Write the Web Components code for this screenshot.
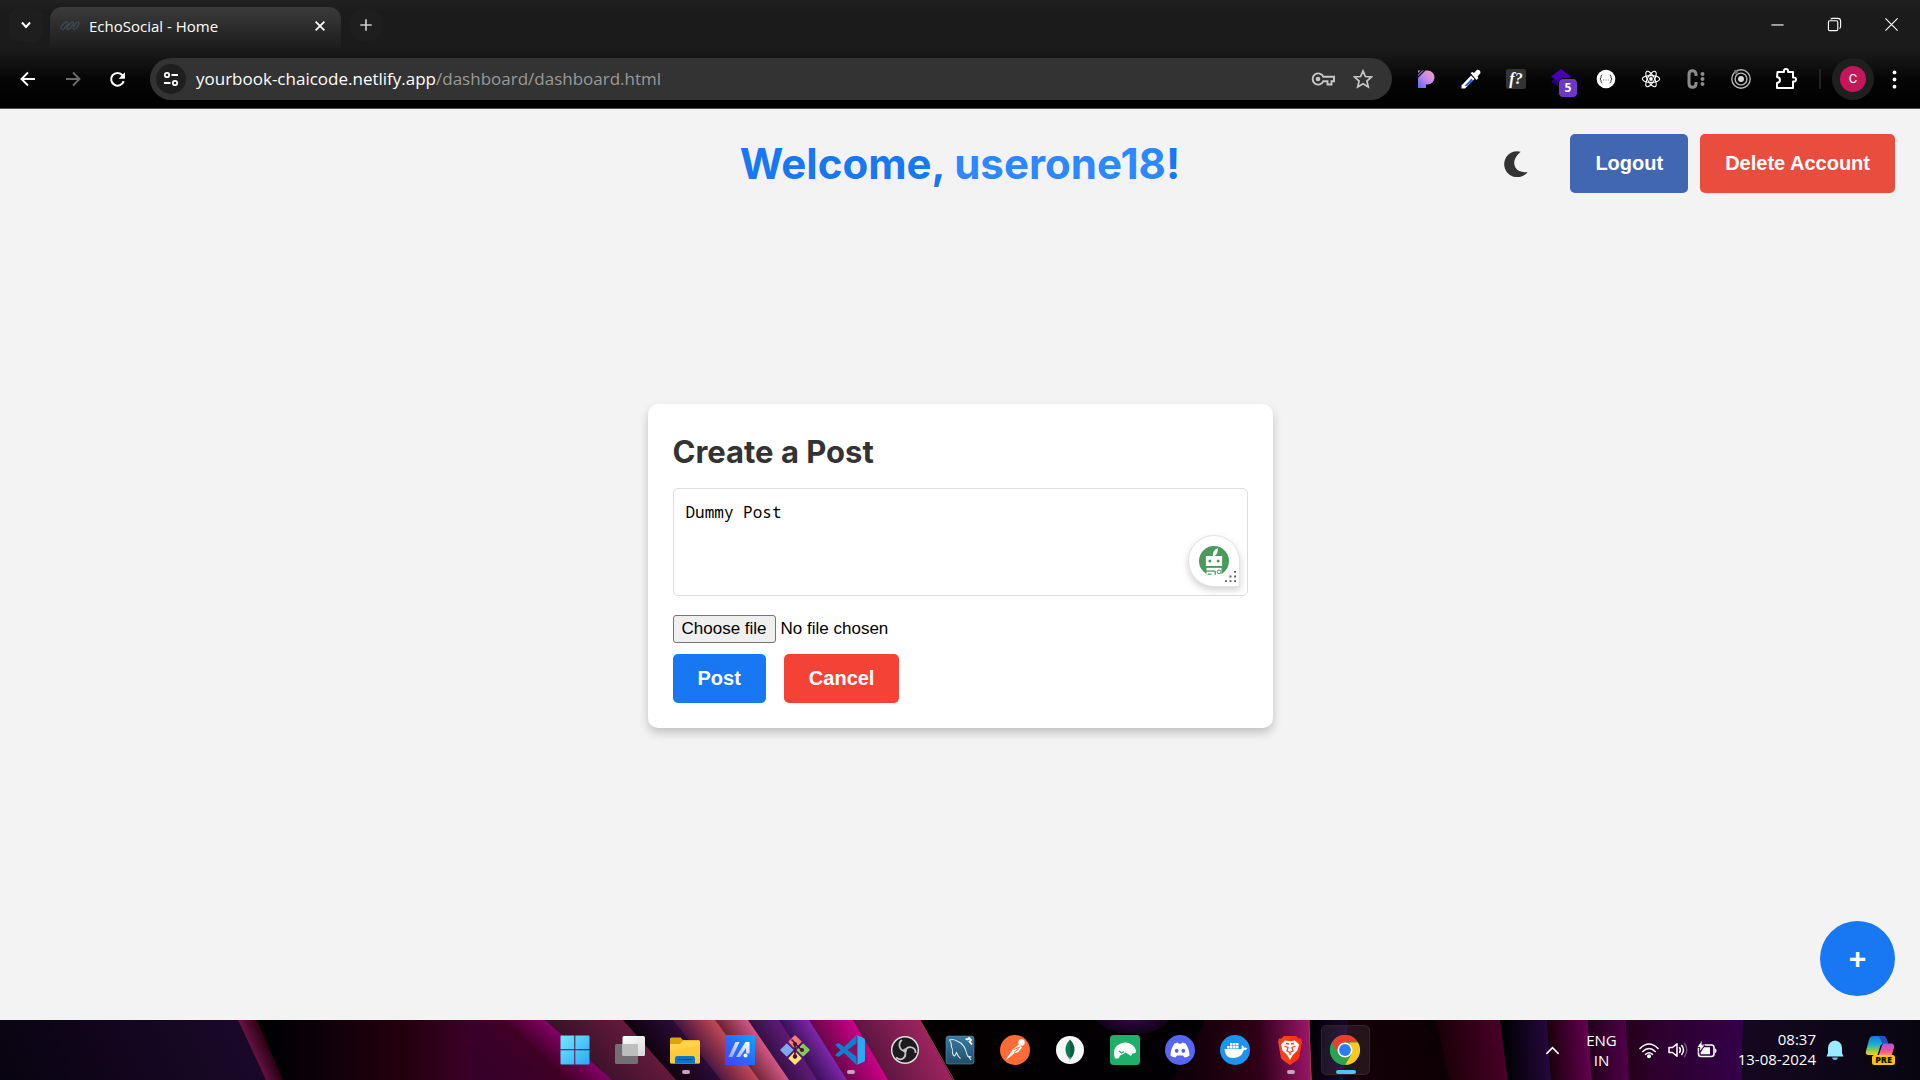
<!DOCTYPE html>
<html lang="en-GB">
<head>
<meta charset="utf-8">
<title>EchoSocial - Home</title>
<style>
  html, body { margin: 0; height: 100%; }
  body { font-family: "Liberation Sans", Arial, sans-serif; background: #f3f3f3; overflow: hidden; }
</style>
</head>
<body>
<desk-top>
  <browser-frame>
    <echo-dashboard user="userone18"><create-post></create-post></echo-dashboard>
  </browser-frame>
  <task-bar></task-bar>
</desk-top>

<script>
const define = (name, css, html) => customElements.define(name, class extends HTMLElement {
  constructor() {
    super();
    const t = document.createElement('template');
    t.innerHTML = `<style>:host,*{box-sizing:border-box}${css}</style>${typeof html === 'function' ? html(this) : html}`;
    this.attachShadow({ mode: 'open' }).append(t.content.cloneNode(true));
  }
});

/* Icon drawings: [viewBox size, markup] */
const line = 'fill="none" stroke="currentColor"';
const ICONS = {
  chevDown: [16, `<path d="M4 5.5l4 4.5 4-4.5" ${line} stroke-width="2"/>`],
  chevUp: [16, `<path d="M2 11l6-6 6 6" ${line} stroke-width="1.8" stroke-linecap="round"/>`],
  close: [16, `<path d="M3 3l10 10M13 3L3 13" ${line} stroke-width="2"/>`],
  plus: [16, `<path d="M8 1.500v13M1.500 8h13" ${line} stroke-width="1.900"/>`],
  winMin: [16, `<path d="M1.500 8.500h13" ${line} stroke-width="1.200"/>`],
  winMax: [16, `<rect x="1.500" y="4" width="10" height="10.500" rx="1.500" ${line} stroke-width="1.200"/><path d="M4 2.500q.5-1 2-1h5.500q3 0 3 3v6q0 1.300-1.200 1.800" ${line} stroke-width="1.200"/>`],
  winClose: [16, `<path d="M1.500 1.500l13 13M14.500 1.500l-13 13" ${line} stroke-width="1.200"/>`],
  back: [16, `<path d="M15 8H2M8 1.500L1.500 8 8 14.500" ${line} stroke-width="1.900"/>`],
  forward: [16, `<path d="M1 8h13M8 1.500L14.500 8 8 14.500" ${line} stroke-width="1.900"/>`],
  reload: [16, `<path d="M13.800 9.500A6 6 0 1 1 12.700 4L14.500 6" ${line} stroke-width="1.900"/><path d="M15 1.200v6H9z" fill="currentColor"/>`],
  tune: [16, `<g ${line} stroke-width="1.800"><circle cx="4" cy="4" r="2.200"/><path d="M8.500 4H15M1 12h6.500"/><circle cx="12" cy="12" r="2.200"/></g>`],
  key: [24, `<g ${line} stroke-width="1.900"><path d="M12.400 9.800A5.600 5.600 0 1 0 12.400 14.200H16.500V17.500H20.500V14.200H23V9.800Z"/></g><circle cx="7" cy="12" r="2.300" fill="currentColor"/>`],
  star: [20, `<path d="M10 1.900l2.400 5.600 6.100.5-4.600 4 1.400 6L10 14.800 4.700 18l1.400-6-4.600-4 6.100-.5z" ${line} stroke-width="1.700"/>`],
  pieces: [20, `<defs><linearGradient id="g" x1="1" y1="0" x2="0" y2="1"><stop offset="0" stop-color="#ff9fc0"/><stop offset=".5" stop-color="#c18aea"/><stop offset="1" stop-color="#5b62ff"/></linearGradient></defs><path d="M2 1.500h9.500a7 7 0 0 1 0 14H10V19H2z" fill="url(#g)"/><path d="M1 6L6 1M1 9L9 1" stroke="#0d0d0d" stroke-width="1.200"/>`],
  dropper: [20, `<path d="M2.500 19.500H.5v-3L10 6.500 13.500 10 4 19.500z" fill="#fff"/><path d="M3.500 17L10.500 9.500 12 11.500 6 17z" fill="#2f55d4"/><path d="M9.500 4l2-1 1.500 1L16 .8Q19.500.5 19.500 4L16.500 7.500 17.500 9 15.500 11z" fill="#fff"/>`],
  whatFont: [20, `<rect width="20" height="20" rx="2.500" fill="#333"/><text x="10" y="15" text-anchor="middle" font-family="Liberation Serif, serif" font-style="italic" font-weight="700" font-size="16" fill="#fff">f?</text>`],
  layers: [20, `<path d="M0 12.500L10 5l10 7.500L10 20z" fill="#23007c"/><path d="M0 7.500L10 0l10 7.500L10 15z" fill="#4600b8"/>`],
  json: [20, `<circle cx="10" cy="10" r="9.300" fill="#fff"/><g fill="none" stroke="#333" stroke-width="1"><path d="M6.300 6Q5 6 5 7.500v1.300L4 10l1 1.200v1.300q0 1.500 1.300 1.500M13.700 6q1.300 0 1.300 1.500v1.300l1 1.200-1 1.200v1.300q0 1.500-1.300 1.500"/></g><path d="M7.200 11h1M9.500 11h1M11.800 11h1" stroke="#777" stroke-width="1"/>`],
  react: [20, `<g fill="none" stroke="#fff" stroke-width="1.100"><ellipse cx="10" cy="10" rx="8.700" ry="3.400"/><ellipse cx="10" cy="10" rx="8.700" ry="3.400" transform="rotate(60 10 10)"/><ellipse cx="10" cy="10" rx="8.700" ry="3.400" transform="rotate(120 10 10)"/></g><circle cx="10" cy="10" r="1.900" fill="#fff"/>`],
  cdots: [20, `<path d="M10 7V5.500Q10 1.700 6.500 1.700T3 5.500v9q0 3.800 3.500 3.800T10 14.500V13" fill="none" stroke="#8b8b8b" stroke-width="3"/><g fill="#8b8b8b"><circle cx="16.500" cy="5" r="2"/><circle cx="16.500" cy="10" r="2"/><circle cx="16.500" cy="15" r="2"/></g>`],
  target: [20, `<g fill="none" stroke="#b5b5b5" stroke-width="1.400"><circle cx="10" cy="10" r="9.200"/><circle cx="10" cy="10" r="5.900"/></g><circle cx="10" cy="10" r="3" fill="#d5d5d5"/><circle cx="5" cy="2.800" r="2" fill="#777"/>`],
  puzzle: [22, `<path d="M2.500 4H9q-.5-3 2-3t2 3h5v5.500q3-.5 3 2t-3 2V20h-16v-5q3-.5 3-3t-3-3z" ${line} stroke-width="2" stroke-linejoin="round"/>`],
  dots: [20, `<g fill="currentColor"><circle cx="10" cy="2.500" r="2"/><circle cx="10" cy="10" r="2"/><circle cx="10" cy="17.500" r="2"/></g>`],
  favicon: [20, `<g fill="none" stroke="#3d4a54" stroke-width="1.300"><path d="M2.500 13.500Q-.5 12 2 9.500L5 6.500Q8 5 8 8L4.500 12.500Q3.500 14 2.500 13.500M8 13.500Q6.500 12.500 8 10L11 6.500Q14 5 13.500 8L10 12.500Q9 14 8 13.500M14 13.500Q12.500 12.500 14 10L16.500 6.500Q20 5 19 8.500L16 12.500Q15 14 14 13.500"/></g>`],
  moon: [24, `<path d="M17.200 0.600A12 12 0 1 0 23.700 19.300Q16 20.500 12.500 15.500 8.500 8 17.200.6z" fill="#333"/>`],
  robot: [24, `<circle cx="12" cy="12" r="12" fill="#4a9a5b"/><g fill="#fff"><path d="M11.200 8Q10.500 3.500 15 1.500q.5 4-2.500 6.500z"/><path d="M5.500 8h13v8h-13z"/><path d="M6 17.500h12V24H6z"/></g><g fill="#4a9a5b"><circle cx="8.700" cy="12" r="1.200"/><circle cx="15.300" cy="12" r="1.200"/><path d="M9.500 16h5v.8h-5zM4 19.500h9v1H4zM12.500 20h1v3h-1zM7 22h3v1H7z"/></g><circle cx="16" cy="20.700" r="1.500" fill="none" stroke="#4a9a5b" stroke-width=".8"/>`],
  grip: [12, `<g fill="#555"><path d="M10 0h2v2h-2zM10 5h2v2h-2zM10 10h2v2h-2zM5 5h2v2H5zM5 10h2v2H5zM0 10h2v2H0z"/></g>`],
  windows: [30, `<defs><linearGradient id="g" x1="0" y1="0" x2="1" y2="1" gradientUnits="objectBoundingBox"><stop offset="0" stop-color="#74e6fd"/><stop offset="1" stop-color="#2aa9f5"/></linearGradient></defs><path d="M.5 1.500Q.5.5 1.500.500H14.300V14.300H.5zM15.300.500H28.500q1 0 1 1V14.300H15.300zM.5 15.300H14.300V29.500H1.500q-1 0-1-1zM15.300 15.300H29.500V28.500q0 1-1 1H15.300z" fill="url(#g)"/>`],
  taskView: [30, `<defs><linearGradient id="g" x2="1" y2="1"><stop stop-color="#fff"/><stop offset="1" stop-color="#d8d8d8"/></linearGradient></defs><rect x="0" y="9" width="23" height="20" rx="1.500" fill="#737075"/><rect x="7.500" y="1" width="22.500" height="20" rx="1.500" fill="url(#g)"/><path d="M7.500 9H23v12H9q-1.500 0-1.500-1.500z" fill="#bdbdbd"/>`],
  folder: [30, `<path d="M0 4Q0 2.500 1.500 2.500H10.500L13 5H28.500Q30 5 30 7V26H0z" fill="#e0a20c"/><path d="M0 9H10L13 5.500H28.500q1.500 0 1.500 1.500V27q0 1.500-1.500 1.500h-27Q0 28.500 0 27z" fill="#ffd24b"/><path d="M0 16L30 10V27q0 1.500-1.500 1.500h-27Q0 28.500 0 27z" fill="#fbc42c" opacity=".6"/><path d="M5 28.500V23.500Q5 21 7.500 21h15q2.500 0 2.500 2.500v5z" fill="#0c74c4"/><path d="M8.500 24.500h13" stroke="#064a86" stroke-width="1"/>`],
  armoury: [30, `<defs><linearGradient id="g" x1="0" y1="1" x2="1" y2="0"><stop stop-color="#4c3cff"/><stop offset=".5" stop-color="#2a6bff"/><stop offset="1" stop-color="#05a8ff"/></linearGradient><linearGradient id="h" x1="0" y1="1" x2="1" y2="0"><stop stop-color="#8ea4ff"/><stop offset="1" stop-color="#fff"/></linearGradient></defs><rect width="30" height="30" fill="url(#g)"/><path d="M3.500 22L10.500 7H14.500L7.500 22zM11 22L20.500 7H24.500V18.500H21V13L15 22z" fill="url(#h)"/><circle cx="20.500" cy="20.500" r="2" fill="#fff"/>`],
  git: [30, `<g stroke-width="1.500" stroke-linejoin="round"><path d="M15 1L20.800 6.800 15 12.600 9.200 6.800z" fill="#f77b7b" stroke="#f77b7b"/><path d="M6.800 9.200L12.600 15 6.800 20.800 1 15z" fill="#80a9f5" stroke="#80a9f5"/><path d="M23.200 9.200L29 15 23.200 20.800 17.400 15z" fill="#82cc5b" stroke="#82cc5b"/><path d="M15 17.400L20.800 23.200 15 29 9.200 23.200z" fill="#ffe07a" stroke="#ffe07a"/></g><g stroke="#4a1030" stroke-width="1.600" fill="none"><path d="M11.500 4.500L15 8V21M15.500 9l6 6"/></g><g fill="#4a1030"><circle cx="15" cy="9" r="2"/><circle cx="22" cy="15" r="2"/><circle cx="15" cy="21.500" r="2.200"/></g>`],
  vscode: [30, `<path d="M21.500 0L9 12 3.500 8 0 9.800 5.500 15 0 20.200 3.500 22 9 18 21.500 30z" fill="#0b80cb"/><path d="M22 8L12.500 15 22 22z" fill="#8a0f62"/><path d="M21.500 0L28.500 3Q30 3.500 30 5V25Q30 26.500 28.500 27L21.500 30Q22.500 29 22.500 27V3Q22.500 1 21.500 0z" fill="#2da8f0"/>`],
  obs: [30, `<circle cx="15" cy="15" r="13.300" fill="#1d1b1e" stroke="#ddd" stroke-width="1.500"/><g fill="none" stroke="#c9c5c9" stroke-width="1.800"><path d="M14.500 16Q10 15 9.500 11 9 7 12 5M15 15.500Q17.500 11 22 12.500 26 14 25.500 18M15 16Q16.500 21 13 23.500 10 25.500 6 22.500"/></g><circle cx="15" cy="15.500" r="2" fill="#c9c5c9"/>`],
  mysql: [30, `<defs><linearGradient id="g" x2="0" y2="1"><stop stop-color="#3a7aa2"/><stop offset="1" stop-color="#204f6b"/></linearGradient></defs><rect x="1" y="1" width="28" height="28" rx="2.500" fill="url(#g)" stroke="#5690b3" stroke-width=".6"/><path d="M26 25L22 19.500Q20 9 12 6 8 3.500 4.500 5 7 8 6.500 12 8 14 7.500 18q1 4 2.500 2.500l1.500-3Q13 21.500 15.500 23.500M22 21l4.500 1" fill="none" stroke="#d7e7f0" stroke-width="1.100"/><path d="M20.500 4l2 .5L24 3l2 2-1.500 1.500L27 9.500" fill="none" stroke="#fff" stroke-width="1.800"/>`],
  postman: [30, `<circle cx="15" cy="15" r="15" fill="#ff6c37"/><circle cx="21.500" cy="7.500" r="3.200" fill="#fff"/><path d="M6 24.500L13 14 19 9.500 22 12.500 18 17.500 14.500 18 7.500 24z" fill="#fff"/><path d="M13.500 14.500L20 12M14 17.500l5-4" stroke="#ff6c37" stroke-width="1"/>`],
  mongo: [30, `<circle cx="15" cy="15" r="14" fill="#f8f8f8"/><path d="M15 4.500Q19.500 9 19.500 14.500 19.500 20 15 24.500z" fill="#0a5f45"/><path d="M15 4.500Q10.500 9 10.500 14.500 10.500 20 15 24.500z" fill="#127a55"/><path d="M15 22v3.500" stroke="#a8c8b8" stroke-width=".8"/>`],
  bear: [30, `<rect width="30" height="30" rx="3.500" fill="#1db06b"/><path d="M4 18Q4 11.500 9 9.500 14 6 20 8.500 25 11 26 15.500L25.500 18 22.500 18.500 21 21 18 19 15.500 17.500 12.500 19.500Q10 19.500 8.500 23.500H5Q4 21 4 18z" fill="#fff"/><path d="M9 16l2.500 2 2.500-1.500" fill="none" stroke="#1db06b" stroke-width="1.100"/>`],
  discord: [30, `<circle cx="15" cy="15" r="15" fill="#5865f2"/><path d="M9.500 8.500L13 7.500l.7 1.300h2.600L17 7.500l3.500 1Q24.500 14 24.500 20.500 22 22.500 19.500 22.500L18 20.500H12l-1.500 2Q8 22.500 5.500 20.500 5.500 14 9.500 8.500z" fill="#fff"/><ellipse cx="11.700" cy="15.800" rx="1.900" ry="2.100" fill="#5865f2"/><ellipse cx="18.300" cy="15.800" rx="1.900" ry="2.100" fill="#5865f2"/>`],
  docker: [30, `<circle cx="15" cy="15" r="15" fill="#1d93ee"/><path d="M4.500 14H21.500Q22 12.500 21.500 11l1-.8q1.200 1 1.500 2.500 1.500-.5 3.300.5-1 2-3.500 2Q21.500 23 13 23 5 23 4.500 14z" fill="#fff"/><path d="M7 11h2.500v2.500H7zM10 11h2.500v2.500H10zM13 11h2.500v2.500H13zM16 11h2.500v2.500H16zM10 8h2.500v2.500H10zM13 8h2.500v2.500H13zM16 8h2.500v2.500H16z" fill="#fff"/>`],
  brave: [30, `<path d="M9 1H21L23.500 3.500 26 3.500 27 7.500 26.500 9 24 23 21 26 15 30 9 26 6 23 3.500 9 3 7.500 4 3.500 6.500 3.500z" fill="#f5411c"/><path d="M15 1H21L23.500 3.500 26 3.500 27 7.500 26.500 9 24 23 15 30z" fill="#ff2a0a" opacity=".5"/><path d="M10 5.500L15 6.300 20 5.500 24 9.500 22.500 15.500 17.800 20 15 25 12.200 20 7.500 15.500 6 9.500z" fill="#fff"/><path d="M9.500 11l3.500 1.500-1 3.500 3 1.500 3-1.500-1-3.500 3.500-1.500M15 17.500V20M11 8.500l3 .5M19 8.500L16 9" fill="none" stroke="#f5411c" stroke-width="1.300"/>`],
  chrome: [30, `<circle cx="15" cy="15" r="15" fill="#2ba24c"/><path d="M2 7.500A15 15 0 0 1 28 7.500H15L8.500 18.700z" fill="#e8402f"/><path d="M28 7.500A15 15 0 0 1 15 30L21.500 18.700 21.500 11.300 19 7.500z" fill="#fdc81c"/><path d="M2 7.500L8.500 18.700 12 21.800 21.500 18.700 15 30A15 15 0 0 1 2 7.500z" fill="#2ba24c"/><circle cx="15" cy="15" r="7.500" fill="#fff"/><circle cx="15" cy="15" r="5.900" fill="#2b7cf0"/>`],
  wifi: [20, `<g fill="none" stroke="#fff" stroke-linecap="round" stroke-width="1.600"><path d="M1 8.500Q10-.5 19 8.500M3.800 11.500Q10 5.500 16.200 11.500M6.600 14.300Q10 11.200 13.400 14.300"/></g><circle cx="10" cy="16.300" r="2" fill="#fff"/>`],
  speaker: [20, `<g fill="none" stroke="#fff" stroke-width="1.500" stroke-linecap="round" stroke-linejoin="round"><path d="M1 7.500H4.500L9 3.800V16.200L4.500 12.500H1zM11.500 7.500q1.800 2.500 0 5M13.800 5.500q3.400 4.500 0 9"/><path d="M16.500 3.500q4.800 6.500 0 13" opacity=".3"/></g>`],
  battery: [20, `<rect x="1.500" y="5" width="15.500" height="11.500" rx="2.500" fill="none" stroke="#fff" stroke-width="1.600"/><path d="M18 8.500q1.500 0 1.500 2.200T18 13z" fill="#fff"/><path d="M7 7.200H13V14.300H3.700V12.500z" fill="#fff"/><path d="M5 0L0 7.500H3L2 12.500 8 5H5z" fill="#fff" stroke="#30004a" stroke-width=".8"/>`],
  bell: [20, `<path d="M10 .5Q16.500 1 17 8v5l1.500 3.500h-17L3 13V8Q3.500 1 10 .5z" fill="#99ebff"/><path d="M7 17.500h6q-.5 2.500-3 2.500t-3-2.500z" fill="#5fc9e6"/>`],
  copilot: [30, `<defs><linearGradient id="g" x2="0" y2="1"><stop stop-color="#1878d8"/><stop offset=".45" stop-color="#18b0d0"/><stop offset=".75" stop-color="#8fcb4a"/><stop offset="1" stop-color="#f5d020"/></linearGradient><linearGradient id="h" x2="0" y2="1"><stop stop-color="#a557e8"/><stop offset=".6" stop-color="#f0529a"/><stop offset="1" stop-color="#ff9a50"/></linearGradient></defs><path d="M8 1H18Q20.500 1 21.500 4L23 8.500H19Q16 8.500 15 12L12.500 20H3.500Q0 20 1 16L4 5Q5 1 8 1z" fill="url(#g)"/><path d="M17 1Q20.500 1 21.500 4L23 8.500H17Q15 1.500 13 1z" fill="#2050c8"/><path d="M19 8.500h7Q30 8.500 29 13L26.500 21H13.500L16.500 12Q17.500 8.500 19 8.500z" fill="url(#h)"/><rect x="7" y="20" width="23" height="10" rx="2.500" fill="#ffc400"/><text x="18.500" y="28" text-anchor="middle" font-family="Open Sans, sans-serif" font-weight="800" font-size="9" fill="#111">PRE</text>`],
};

customElements.define('ui-icon', class extends HTMLElement {
  connectedCallback() {
    if (this.shadowRoot) return;
    const [box, art] = ICONS[this.getAttribute('name')];
    const size = this.getAttribute('size') || box;
    this.attachShadow({ mode: 'open' }).innerHTML =
      `<style>:host{display:block;flex:none}svg{display:block}</style>
       <svg width="${size}" height="${size}" viewBox="0 0 ${box} ${box}" aria-hidden="true">${art}</svg>`;
  }
});

const icon = (name, size) => `<ui-icon name="${name}"${size ? ` size="${size}"` : ''}></ui-icon>`;
const ibtn = (name, label, size, cls = '') => `<button class="${cls}" aria-label="${label}">${icon(name, size)}</button>`;
const bare = `button{border:0;margin:0;padding:0;background:none;color:inherit;font:inherit;display:grid;place-items:center}`;

define('desk-top', `
  :host{display:flex;flex-direction:column;min-height:100vh}
  ::slotted(browser-frame){flex:1}`, `<slot></slot>`);

define('browser-frame', `
  :host{display:flex;flex-direction:column;color:#fff}
  ::slotted(*){flex:1}`,
  `<tab-strip></tab-strip><tool-bar></tool-bar><slot></slot>`);

define('tab-strip', `${bare}
  :host{display:flex;height:50px;background:linear-gradient(#212121,#1b1b1b 12px);font:15px "Open Sans","Noto Sans",sans-serif}
  .search{width:34px;height:34px;margin:8px 7px 8px 9px;border-radius:10px;background:#1e1e1e}
  .tab{display:flex;align-items:center;width:291px;margin-top:7px;padding:0 11px 6px 10px;border-radius:12px 12px 0 0;background:linear-gradient(#3b3b3b,#1b1b1b)}
  .title{flex:1;padding-left:9px;font-size:15px;line-height:20px}
  .close{width:20px;height:20px}
  .new{width:34px;height:34px;margin:8px;border-radius:50%;background:#1e1e1e;color:#ccc}
  .win{display:flex;margin-left:auto}
  .win button{width:57px;height:48px}`,
  `${ibtn('chevDown', 'Search tabs', 16, 'search')}
   <div class="tab">${icon('favicon')}<span class="title">EchoSocial - Home</span>${ibtn('close', 'Close tab', 14, 'close')}</div>
   ${ibtn('plus', 'New tab', 14, 'new')}
   <div class="win">${ibtn('winMin', 'Minimise', 15)}${ibtn('winMax', 'Restore', 15)}${ibtn('winClose', 'Close', 15)}</div>`);

define('tool-bar', `${bare}
  :host{display:flex;align-items:center;height:59px;padding:0 6px 0 5px;background:linear-gradient(#1b1b1b,#050505 30px,#000);border-bottom:1px solid #554f4f}
  button{width:45px;height:42px}
  .off{color:#6b6b6b}
  .url{flex:1;display:flex;align-items:center;height:42px;margin:0 11px 0 10px;padding:0 9px 0 6px;border-radius:21px;background:#333}
  .url button{width:40px;color:#c7c7c7}
  .url .site{width:30px;height:30px;border-radius:50%;background:#1f1f1f;color:#fff}
  .address{flex:1;padding-left:10px;font:17px/24px "Open Sans","Noto Sans",sans-serif;color:#9a9a9a}
  .address b{font-weight:400;color:#fff}
  .ext{position:relative}
  .badge{position:absolute;left:20px;top:20px;width:20px;height:20px;border:1px solid #0a0a0a;border-radius:5px;background:#6c38c4;font:700 12px/18px "Open Sans",sans-serif;text-align:center}
  .sep{width:2px;height:20px;margin:0 11px;background:#222}
  .avatar{width:42px;border-radius:50%;background:#1f1f1f}
  .avatar span{width:26px;height:26px;border-radius:50%;background:#c2185b;font:13px/26px Roboto,sans-serif}
  .menu{width:40px}`,
  `${ibtn('back', 'Back', 16)}${ibtn('forward', 'Forward', 16, 'off')}${ibtn('reload', 'Reload', 17)}
   <div class="url">${ibtn('tune', 'Site information', 16, 'site')}
     <span class="address"><b>yourbook-chaicode.netlify.app</b>/dashboard/dashboard.html</span>
     ${ibtn('key', 'Passwords', 24)}${ibtn('star', 'Bookmark', 20)}</div>
   ${ibtn('pieces', 'Extension', 20)}${ibtn('dropper', 'Colour picker', 20)}${ibtn('whatFont', 'Font finder', 20)}
   <button class="ext" aria-label="Layers">${icon('layers', 20)}<span class="badge">5</span></button>
   ${ibtn('json', 'JSON viewer', 20)}${ibtn('react', 'React tools', 20)}${ibtn('cdots', 'Extension', 20)}${ibtn('target', 'Extension', 20)}${ibtn('puzzle', 'Extensions', 22)}
   <div class="sep"></div>
   <button class="avatar" aria-label="Profile"><span>C</span></button>
   ${ibtn('dots', 'Menu', 19, 'menu')}`);

define('action-button', `
  :host{display:block}
  button{border:0;border-radius:5px;padding:var(--pad,13px) 25px;background:var(--tone,#1877f2);color:#fff;font:700 20px/23px "Liberation Sans",Arial,sans-serif;white-space:nowrap;display:block}`,
  `<button><slot></slot></button>`);

define('echo-dashboard', `${bare}
  :host{display:grid;grid-template-rows:1fr auto 1fr;background:#f3f3f3;color:#333}
  header{display:grid;grid-template-columns:1fr auto 1fr;align-items:center;align-self:start;padding:25px}
  h1{grid-column:2;margin:0;font:700 42px/59px Inter,sans-serif;color:#1877f2}
  h1 span{color:#2d88ff}
  .actions{display:flex;align-items:center;justify-content:flex-end;gap:12px;--pad:18px}
  .theme{width:50px;height:50px;margin-right:18px}
  main{display:flex;justify-content:center;padding-top:2px}
  footer{display:flex;justify-content:flex-end;align-items:flex-end;padding:24px 25px}
  .add{width:75px;height:75px;border-radius:50%;background:#1877f2;color:#fff;font:700 30px/34px "Liberation Sans",Arial,sans-serif}`,
  el => `<header><h1>Welcome, <span>${el.getAttribute('user')}</span>!</h1>
     <div class="actions">${ibtn('moon', 'Dark mode', 26, 'theme')}
       <action-button style="--tone:#4267b2">Logout</action-button>
       <action-button style="--tone:#e94d3d">Delete Account</action-button></div></header>
   <main><slot></slot></main>
   <footer><button class="add" aria-label="New post">+</button></footer>`);

define('create-post', `${bare}
  :host{display:block;width:625px;max-width:90%;padding:25px;border-radius:10px;background:#fff;box-shadow:0 5px 10px rgba(0,0,0,.2)}
  h2{margin:0 0 13px;font:700 31px/46px Inter,sans-serif;color:#333}
  .box{position:relative;margin-bottom:19px}
  textarea{display:block;width:100%;height:108px;margin:0;padding:13px 12px;border:1px solid #ddd;border-radius:5px;resize:none;outline:0;background:#fff;color:#000;font:16px/20px "Noto Sans Mono","DejaVu Sans Mono","Liberation Mono",monospace}
  .bot{position:absolute;right:8px;bottom:9px;width:52px;height:52px;border:1px solid #e3e3e3;border-radius:50% 50% 0 50%;background:#fff;box-shadow:0 3px 7px rgba(0,0,0,.18)}
  .grip{position:absolute;right:3px;bottom:4px}
  .file{display:flex;align-items:center;gap:5px;margin-bottom:11px;color:#000;font-size:17px;line-height:20px}
  .file input{position:absolute;width:1px;height:1px;opacity:0}
  .file label{padding:3px 8px;border:1px solid #767676;border-radius:3px;background:#efefef}
  .row{display:flex;gap:18px}`,
  `<h2>Create a Post</h2>
   <div class="box"><textarea aria-label="Post text">Dummy Post</textarea>
     <button class="bot" aria-label="Writing assistant">${icon('robot', 30)}<span class="grip">${icon('grip', 11)}</span></button></div>
   <div class="file"><input type="file" id="media"><label for="media">Choose file</label><span>No file chosen</span></div>
   <div class="row"><action-button>Post</action-button><action-button style="--tone:#f44336">Cancel</action-button></div>`);

/* Wallpaper bands: colours at both sides, then top-left, top-right, bottom-right, bottom-left x */
const bands = [
  ['#090412', '#1b0829', 0, 238, 266, 0], ['#651243', '#26000f', 238, 258, 284, 266], ['#000004', '#24000e', 257, 400, 400, 283],
  ['#22000c', '#3c0026', 399, 470, 470, 399], ['#36002a', '#430024', 469, 520, 585, 469], ['#45002b', '#850068', 505, 546, 613, 570],
  ['#3c122a', '#651a3a', 545, 624, 677, 612], ['#10020f', '#2c0c38', 623, 674, 722, 676], ['#4a1640', '#c44a55', 673, 716, 760, 721],
  ['#6d2436', '#d45a88', 715, 749, 790, 759], ['#371047', '#601b78', 748, 780, 818, 789], ['#381056', '#8028ac', 779, 810, 848, 817],
  ['#6c064c', '#ce0088', 809, 854, 889, 847], ['#5e1641', '#9e2460', 853, 921, 954, 888], ['#040002', '#020003', 920, 1206, 1174, 953],
  ['#10000a', '#310016', 1205, 1260, 1262, 1173], ['#31001b', '#9c1669', 1259, 1309, 1312, 1261], ['#020006', '#1c0730', 1309, 1349, 1344, 1312],
  ['#160009', '#0c0004', 1348, 1438, 1450, 1343], ['#1d0009', '#480027', 1437, 1500, 1508, 1449], ['#000002', '#25083c', 1500, 1547, 1551, 1508],
  ['#1a000c', '#650050', 1547, 1588, 1592, 1551], ['#21001a', '#510049', 1588, 1626, 1629, 1592], ['#26001c', '#300035', 1626, 1673, 1674, 1629],
  ['#2c0032', '#340049', 1673, 1743, 1742, 1674], ['#140820', '#080510', 1743, 1920, 1920, 1742],
];
/* Each band is shaded at right angles to its slanted edge */
const shade = ([from, to, a, b, c, d], i) => {
  const lean = c - b, width = (b + c - a - d) / 2, k = width * 60 / (3600 + lean * lean), x = (a + d) / 2;
  return `<linearGradient id="b${i}" gradientUnits="userSpaceOnUse" x1="${x}" y1="30" x2="${x + 60 * k}" y2="${30 - lean * k}"><stop stop-color="${from}"/><stop offset="1" stop-color="${to}"/></linearGradient>`;
};
const wallpaper = `<svg class="wall" viewBox="0 0 1920 60" preserveAspectRatio="none" aria-hidden="true"><defs>${bands.map(shade).join('')
}<radialGradient id="glow"><stop stop-color="#3a0a50"/><stop offset="1" stop-color="#12021a"/></radialGradient></defs>${
  bands.map(([, , a, b, c, d], i) => `<path d="M${a} 0H${b}L${c} 60H${d}z" fill="url(#b${i})"/>`).join('')
}<ellipse cx="1133" cy="-6" rx="38" ry="20" fill="url(#glow)"/><path d="M920 0L954 60M1309 0L1311 60" stroke="#a0403c" stroke-width="1"/></svg>`;

define('task-bar', `${bare}
  :host{position:relative;display:grid;grid-template-columns:1fr auto 1fr;height:60px;background:#080410;color:#fff;font:15px/20px "Open Sans","Noto Sans",sans-serif}
  .wall{position:absolute;inset:0;width:100%;height:100%}
  nav{position:relative;grid-column:2;display:flex;align-items:center}
  nav button{position:relative;width:55px;height:60px}
  .open::after{content:"";position:absolute;left:24px;bottom:6px;width:8px;height:4px;border-radius:2px;background:#c9a3bb}
  .active::before{content:"";position:absolute;inset:5px 3px;border:1px solid #2e2429;border-radius:5px;background:rgba(255,255,255,.08)}
  .active::after{left:18px;width:20px;background:#4cc2ff}
  .active ui-icon{position:relative}
  .tray{position:relative;display:flex;align-items:center;justify-content:flex-end;padding-right:25px}
  .lang{margin:0 22px 0 26px;text-align:center}
  .status{display:flex;gap:9px}
  .clock{margin:0 9px 0 21px;padding-bottom:2px;text-align:right}
  .bell{margin-right:20px}`,
  `${wallpaper}<nav>${[
    ['windows', 'Start'], ['taskView', 'Task view'], ['folder', 'File Explorer', 'open'], ['armoury', 'Armoury'], ['git', 'Git'],
    ['vscode', 'Visual Studio Code', 'open'], ['obs', 'OBS'], ['mysql', 'MySQL Workbench'], ['postman', 'Postman'], ['mongo', 'MongoDB'],
    ['bear', 'Bear'], ['discord', 'Discord'], ['docker', 'Docker'], ['brave', 'Brave', 'open'], ['chrome', 'Chrome', 'open active'],
  ].map(([n, l, c]) => ibtn(n, l, 30, c)).join('')}</nav>
  <div class="tray">${ibtn('chevUp', 'Hidden icons', 15)}
    <button class="lang"><span>ENG<br>IN</span></button>
    <div class="status">${icon('wifi')}${icon('speaker')}${icon('battery')}</div>
    <button class="clock"><span>08:37<br>13-08-2024</span></button>
    ${ibtn('bell', 'Notifications', 20, 'bell')}${ibtn('copilot', 'Copilot', 30)}</div>`);
</script>
</body>
</html>
